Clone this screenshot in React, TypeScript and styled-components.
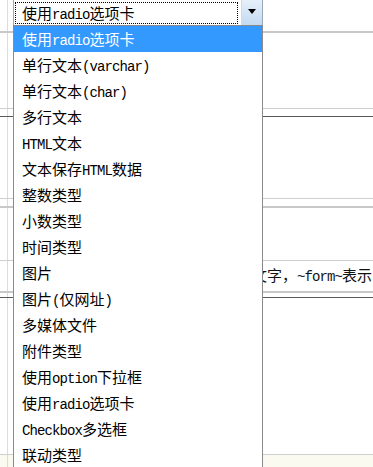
import { FC } from "react";
import styled, { createGlobalStyle } from "styled-components";

const GlobalStyle = createGlobalStyle`
  html, body {
    margin: 0;
    padding: 0;
    background: #fff;
  }
  body {
    font-family: "Noto Sans CJK SC", "Liberation Sans", sans-serif;
    color: #000;
  }
`;

type Line = "light" | "thick" | "dark" | "none";

interface RowData {
  h: number;
  line: Line;
  text?: string;
  tint?: boolean;
}

const rows: RowData[] = [
  { h: 31, line: "thick" },
  { h: 75, line: "light" },
  { h: 7, line: "dark" },
  { h: 81, line: "light" },
  { h: 7, line: "thick" },
  { h: 52, line: "light" },
  { h: 30, line: "thick", text: "文字，~form~表示" },
  { h: 4, line: "dark" },
  { h: 156, line: "light" },
  { h: 20, line: "none", tint: true },
];

const options = [
  "使用radio选项卡",
  "单行文本(varchar)",
  "单行文本(char)",
  "多行文本",
  "HTML文本",
  "文本保存HTML数据",
  "整数类型",
  "小数类型",
  "时间类型",
  "图片",
  "图片(仅网址)",
  "多媒体文件",
  "附件类型",
  "使用option下拉框",
  "使用radio选项卡",
  "Checkbox多选框",
  "联动类型",
];

// old SimSun look: latin glyphs are half-width, so render latin runs in a mono face
const Mixed: FC<{ text: string }> = ({ text }) => {
  const parts = text.match(/[\x20-\x7e]+|[^\x20-\x7e]+/g) || [];
  return (
    <>
      {parts.map((p, i) =>
        /^[\x20-\x7e]+$/.test(p) ? <Latin key={i}>{p}</Latin> : <span key={i}>{p}</span>
      )}
    </>
  );
};

const App: FC = () => {
  return (
    <Page>
      <GlobalStyle />
      <Form>
        {rows.map((r, i) => (
          <Row key={i} $h={r.h} $line={r.line} $tint={r.tint}>
            <LabelCell />
            <ContentCell>
              {r.text && (
                <HintText>
                  <Mixed text={r.text} />
                </HintText>
              )}
            </ContentCell>
          </Row>
        ))}
      </Form>

      <SelectWrap>
        <SelectBox>
          <Field>
            <Mixed text="使用radio选项卡" />
          </Field>
          <ArrowButton>
            <svg width="8" height="5" viewBox="0 0 8 5">
              <path d="M0 0 H8 L4 5 Z" fill="#000" />
            </svg>
          </ArrowButton>
        </SelectBox>
        <ListBox>
          {options.map((o, i) => (
            <Option key={i} $active={i === 0}>
              <Mixed text={o} />
            </Option>
          ))}
        </ListBox>
      </SelectWrap>
    </Page>
  );
};

const Page = styled.div`
  position: relative;
  width: 373px;
  height: 467px;
  overflow: hidden;
  background: #fff;
`;

const Form = styled.div`
  display: flex;
  flex-direction: column;
  width: 100%;
`;

const lineStyle = (line: Line) => {
  switch (line) {
    case "thick":
      return "border-bottom: 2px solid #c8c8c8;";
    case "dark":
      return "border-bottom: 1px solid #5a5a5a; box-shadow: 0 2px 3px -1px rgba(0,0,0,0.08);";
    case "light":
      return "border-bottom: 1px solid #cfcfcf;";
    default:
      return "";
  }
};

const Row = styled.div<{ $h: number; $line: Line; $tint?: boolean }>`
  display: grid;
  grid-template-columns: 8px 1fr;
  height: ${(p) => p.$h}px;
  flex-shrink: 0;
  background: ${(p) => (p.$tint ? "#fafaf0" : "#fff")};
  ${(p) => lineStyle(p.$line)}
`;

const LabelCell = styled.div`
  border-right: 1px solid #dcdcdc;
`;

const ContentCell = styled.div`
  display: flex;
  align-items: center;
  padding-left: 244px;
  overflow: hidden;
`;

const Latin = styled.span`
  font-family: "Liberation Mono", "DejaVu Sans Mono", monospace;
  font-size: 14px;
  letter-spacing: -0.9px;
`;

const HintText = styled.span`
  font-size: 15px;
  line-height: 30px;
  white-space: nowrap;
  color: #111;
`;

const SelectWrap = styled.div`
  position: absolute;
  left: 13px;
  top: -1px;
  width: 250px;
`;

const SelectBox = styled.div`
  display: flex;
  align-items: stretch;
  height: 26px;
  box-sizing: border-box;
  border: 1px solid #9aa9b8;
  border-bottom: none;
  background: #fff;
  padding: 2px 0 0 1px;
`;

const Field = styled.div`
  flex: 1;
  height: 22px;
  box-sizing: border-box;
  border: 1px dotted #000;
  padding-left: 6px;
  font-size: 15px;
  line-height: 20px;
  white-space: nowrap;
`;

const ArrowButton = styled.div`
  width: 20px;
  margin-left: 3px;
  margin-top: -2px;
  display: flex;
  align-items: center;
  justify-content: center;
  padding-bottom: 2px;
  background: linear-gradient(#e6f0fa, #c3daf1);
  border-left: 1px solid #c9dcee;
`;

const ListBox = styled.div`
  border: 1px solid #8a8a8a;
  background: #fff;
  display: flex;
  flex-direction: column;
`;

const Option = styled.div<{ $active?: boolean }>`
  height: 26px;
  flex-shrink: 0;
  padding-left: 8px;
  font-size: 15px;
  line-height: 26px;
  white-space: nowrap;
  color: ${(p) => (p.$active ? "#fff" : "#000")};
  background: ${(p) => (p.$active ? "#3399ff" : "transparent")};
`;

export default App;
